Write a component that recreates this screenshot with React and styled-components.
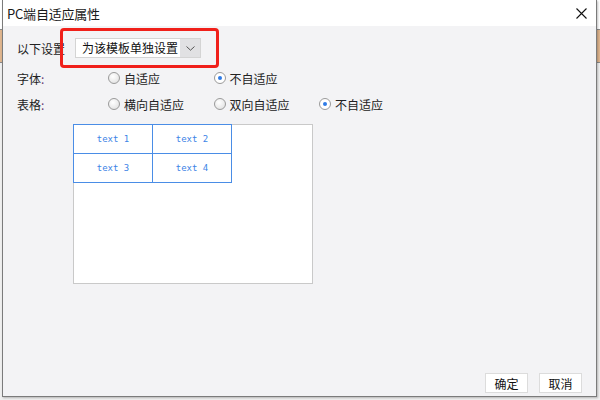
import React from "react";
import styled, { createGlobalStyle } from "styled-components";

const GlobalStyle = createGlobalStyle`
  html, body {
    margin: 0;
    padding: 0;
  }
  body {
    font-family: "Noto Sans CJK SC", "Liberation Sans", sans-serif;
    font-size: 12px;
    color: #222;
  }
`;

const Backdrop = styled.div`
  width: 600px;
  height: 400px;
  overflow: hidden;
  background: linear-gradient(
    to bottom,
    #ffffff 0 29px,
    #8a8a8a 29px 30px,
    #dfb58e 30px 62px,
    #8a8a8a 62px 63px,
    #efefef 63px
  );
`;

const Dialog = styled.div`
  margin-left: 2px;
  width: 595px;
  height: 397px;
  box-sizing: border-box;
  border: 1px solid #7b7b7b;
  border-top: none;
  background: #f3f3f5;
  display: flex;
  flex-direction: column;
  box-shadow: 1px 1px 2px rgba(0, 0, 0, 0.25);
`;

const TitleBar = styled.div`
  height: 26px;
  flex: none;
  background: #fff;
  display: flex;
  align-items: center;
  justify-content: space-between;
  padding: 0 9px 0 4px;
`;

const Title = styled.span`
  font-size: 13px;
  color: #1a1a1a;
  letter-spacing: -0.2px;
`;

const CloseBtn = styled.button`
  border: none;
  background: none;
  padding: 0;
  width: 11px;
  height: 11px;
  display: flex;
  cursor: pointer;
`;

const Body = styled.div`
  flex: 1;
  display: flex;
  flex-direction: column;
  padding: 0 14px;
`;

const SettingRow = styled.div`
  position: relative;
  display: flex;
  align-items: center;
  height: 20px;
  margin-top: 12px;
`;

const Label = styled.span`
  width: ${(p) => p.$w || 91}px;
  flex: none;
  color: #222;
`;

const Colon = styled.span`
  color: #6a3c74;
`;

const Select = styled.div`
  display: flex;
  height: 20px;
  box-sizing: border-box;
  border: 1px solid #d4d4d4;
  background: #fff;
`;

const SelectText = styled.span`
  width: 104px;
  box-sizing: border-box;
  padding-left: 6px;
  line-height: 18px;
  font-size: 12px;
  color: #111;
`;

const SelectArrow = styled.span`
  width: 20px;
  background: #e1e1e3;
  display: flex;
  align-items: center;
  justify-content: center;
`;

const Highlight = styled.div`
  position: absolute;
  left: 43px;
  top: -10px;
  width: 159px;
  height: 40px;
  box-sizing: border-box;
  border: 3px solid #f0201a;
  border-radius: 4px;
  pointer-events: none;
`;

const RadioRow = styled.div`
  display: grid;
  grid-template-columns: 91px repeat(3, 105.5px);
  align-items: center;
  height: 20px;
  margin-top: ${(p) => p.$mt}px;
`;

const Option = styled.label`
  display: flex;
  align-items: center;
  gap: 4px;
  color: #222;
`;

const Radio = styled.span`
  width: 12px;
  height: 12px;
  box-sizing: border-box;
  border-radius: 50%;
  border: 1px solid #9a9a9a;
  background: ${(p) =>
    p.$checked ? "#fff" : "radial-gradient(circle at 40% 35%, #ffffff, #dcdcdc)"};
  display: flex;
  align-items: center;
  justify-content: center;
  &::after {
    content: "";
    width: 4px;
    height: 4px;
    border-radius: 50%;
    background: #2f7be6;
    display: ${(p) => (p.$checked ? "block" : "none")};
  }
`;

const Preview = styled.div`
  margin: 10px 0 0 56px;
  width: 240px;
  height: 160px;
  box-sizing: border-box;
  border: 1px solid #c9c9c9;
  background: #fff;
`;

const Table = styled.div`
  margin: -1px 0 0 -1px;
  display: grid;
  grid-template-columns: repeat(2, 79px);
  grid-auto-rows: 29px;
  width: 159px;
  box-sizing: border-box;
  border-left: 1px solid #4a8de6;
  border-top: 1px solid #4a8de6;
`;

const Cell = styled.div`
  border-right: 1px solid #4a8de6;
  border-bottom: 1px solid #4a8de6;
  display: flex;
  align-items: center;
  justify-content: center;
  font-family: "DejaVu Sans Mono", "Liberation Mono", monospace;
  font-size: 9px;
  color: #3d84e6;
`;

const Footer = styled.div`
  margin-top: auto;
  display: flex;
  justify-content: flex-end;
  gap: 11px;
  padding-bottom: 3px;
`;

const Button = styled.button`
  width: 43px;
  height: 20px;
  box-sizing: border-box;
  border: 1px solid #dcdcdc;
  background: #fff;
  font-family: "Noto Sans CJK SC", sans-serif;
  font-size: 12px;
  color: #111;
  padding: 0;
  cursor: pointer;
`;

const fontOpts = [
  { text: "自适应", checked: false },
  { text: "不自适应", checked: true },
];
const tableOpts = [
  { text: "横向自适应", checked: false },
  { text: "双向自适应", checked: false },
  { text: "不自适应", checked: true },
];

export default function App() {
  return (
    <>
      <GlobalStyle />
      <Backdrop>
        <Dialog>
          <TitleBar>
            <Title>PC端自适应属性</Title>
            <CloseBtn aria-label="close">
              <svg width="11" height="11" viewBox="0 0 11 11">
                <path d="M0.5 0.5 L10.5 10.5 M10.5 0.5 L0.5 10.5" stroke="#111" strokeWidth="1.1" />
              </svg>
            </CloseBtn>
          </TitleBar>
          <Body>
            <SettingRow>
              <Label $w={58}>以下设置</Label>
              <Select>
                <SelectText>为该模板单独设置</SelectText>
                <SelectArrow>
                  <svg width="9" height="5" viewBox="0 0 9 5">
                    <path d="M0.5 0.5 L4.5 4.2 L8.5 0.5" fill="none" stroke="#555" strokeWidth="1" />
                  </svg>
                </SelectArrow>
              </Select>
              <Highlight />
            </SettingRow>
            <RadioRow $mt={10}>
              <Label>字体<Colon>:</Colon></Label>
              {fontOpts.map((o) => (
                <Option key={o.text}>
                  <Radio $checked={o.checked} />
                  {o.text}
                </Option>
              ))}
            </RadioRow>
            <RadioRow $mt={6}>
              <Label>表格<Colon>:</Colon></Label>
              {tableOpts.map((o) => (
                <Option key={o.text}>
                  <Radio $checked={o.checked} />
                  {o.text}
                </Option>
              ))}
            </RadioRow>
            <Preview>
              <Table>
                {["text 1", "text 2", "text 3", "text 4"].map((t) => (
                  <Cell key={t}>{t}</Cell>
                ))}
              </Table>
            </Preview>
            <Footer>
              <Button>确定</Button>
              <Button>取消</Button>
            </Footer>
          </Body>
        </Dialog>
      </Backdrop>
    </>
  );
}
